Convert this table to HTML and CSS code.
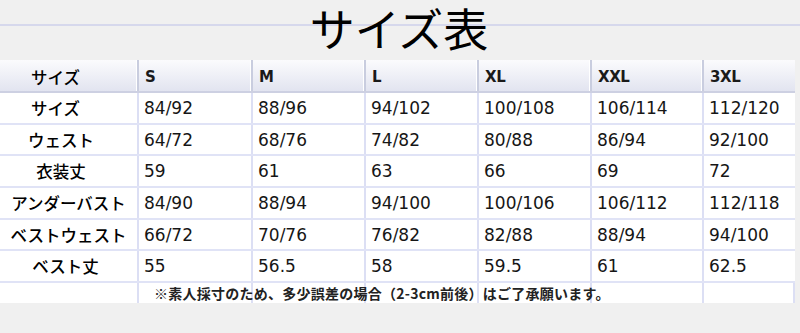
FILE: index.html
```html
<!DOCTYPE html>
<html lang="ja">
<head>
<meta charset="utf-8">
<title>サイズ表</title>
<link rel="stylesheet" href="styles.css">
</head>
<body>
<div class="page">
  <header class="title-bar">
    <div class="title-rule"></div>
    <h1 class="title">サイズ表</h1>
  </header>
  <div class="size-table">
    <div class="row head">
      <div class="cell label">サイズ</div>
      <div class="cell">S</div>
      <div class="cell">M</div>
      <div class="cell">L</div>
      <div class="cell">XL</div>
      <div class="cell">XXL</div>
      <div class="cell">3XL</div>
    </div>
    <div class="row">
      <div class="cell label shift-lg">サイズ</div>
      <div class="cell">84/92</div>
      <div class="cell">88/96</div>
      <div class="cell">94/102</div>
      <div class="cell">100/108</div>
      <div class="cell">106/114</div>
      <div class="cell">112/120</div>
    </div>
    <div class="row">
      <div class="cell label shift">ウェスト</div>
      <div class="cell">64/72</div>
      <div class="cell">68/76</div>
      <div class="cell">74/82</div>
      <div class="cell">80/88</div>
      <div class="cell">86/94</div>
      <div class="cell">92/100</div>
    </div>
    <div class="row">
      <div class="cell label shift">衣装丈</div>
      <div class="cell">59</div>
      <div class="cell">61</div>
      <div class="cell">63</div>
      <div class="cell">66</div>
      <div class="cell">69</div>
      <div class="cell">72</div>
    </div>
    <div class="row">
      <div class="cell label">アンダーバスト</div>
      <div class="cell">84/90</div>
      <div class="cell">88/94</div>
      <div class="cell">94/100</div>
      <div class="cell">100/106</div>
      <div class="cell">106/112</div>
      <div class="cell">112/118</div>
    </div>
    <div class="row">
      <div class="cell label">ベストウェスト</div>
      <div class="cell">66/72</div>
      <div class="cell">70/76</div>
      <div class="cell">76/82</div>
      <div class="cell">82/88</div>
      <div class="cell">88/94</div>
      <div class="cell">94/100</div>
    </div>
    <div class="row">
      <div class="cell label shift-sm">ベスト丈</div>
      <div class="cell">55</div>
      <div class="cell">56.5</div>
      <div class="cell">58</div>
      <div class="cell">59.5</div>
      <div class="cell">61</div>
      <div class="cell">62.5</div>
    </div>
    <div class="row foot">
      <div class="cell"></div>
      <div class="cell"></div>
      <div class="cell"></div>
      <div class="cell"></div>
      <div class="cell"></div>
      <div class="cell"></div>
      <div class="cell"></div>
      <p class="note">※素人採寸のため、多少誤差の場合（2-3cm前後）はご了承願います。</p>
    </div>
  </div>
</div>
</body>
</html>
```

FILE: styles.css
```css
* { box-sizing: border-box; }

html, body {
  margin: 0;
  padding: 0;
  background: #f0f0f0;
}

.page {
  width: 800px;
  height: 333px;
  overflow: hidden;
}

.title-bar {
  position: relative;
  height: 60px;
}

.title-rule {
  position: absolute;
  left: 0;
  right: 0;
  top: 24px;
  height: 2px;
  background: #d6d8ec;
}

.title {
  position: relative;
  margin: 0;
  text-align: center;
  font-family: "Noto Sans CJK JP", sans-serif;
  font-weight: 400;
  font-size: 45px;
  line-height: 56px;
  color: #000;
  padding-right: 2px;
}

.size-table {
  width: 795px;
  background: #fff;
}

.row {
  display: grid;
  grid-template-columns: 139px 114px 113px 113px 113px 112px 91px;
  height: 31.7px;
  border-bottom: 2px solid #e0e3f6;
}

.cell {
  display: flex;
  align-items: center;
  padding-left: 5px;
  border-right: 2px solid #dcdff4;
  font-family: "DejaVu Sans", sans-serif;
  font-size: 17px;
  color: #161616;
  white-space: nowrap;
}

.cell:last-child { border-right: 0; }

.label {
  justify-content: center;
  padding-left: 0;
  padding-right: 0;
  font-family: "Noto Sans CJK JP", sans-serif;
  font-size: 16.5px;
  font-weight: 500;
  color: #000;
}

.label.shift-sm { padding-right: 6px; }
.label.shift { padding-right: 15px; }
.label.shift-lg { padding-right: 26px; }

.head {
  height: 33px;
  background: linear-gradient(#fbfbfd, #e2e4f0);
  border-bottom: 2px solid #cdd0e2;
}

.head .cell {
  padding-top: 3px;
  padding-left: 6px;
  font-size: 15px;
  font-weight: bold;
  letter-spacing: -0.4px;
  color: #1a1a1a;
  border-right: 2px solid #c9cddf;
  box-shadow: inset -1px 0 0 #ffffff;
}

.head .label {
  padding-left: 0;
  padding-right: 26px;
  font-weight: 500;
  font-size: 16.5px;
  letter-spacing: 0;
  color: #000;
}

.head .cell:last-child { border-right: 0; box-shadow: none; }

.foot {
  position: relative;
  height: 20px;
  border-bottom: 0;
}

.note {
  position: absolute;
  left: 154px;
  top: 1px;
  margin: 0;
  font-family: "Noto Sans CJK JP", sans-serif;
  font-weight: bold;
  font-size: 14px;
  line-height: 18px;
  letter-spacing: 0.25px;
  color: #222;
  white-space: nowrap;
}
```
